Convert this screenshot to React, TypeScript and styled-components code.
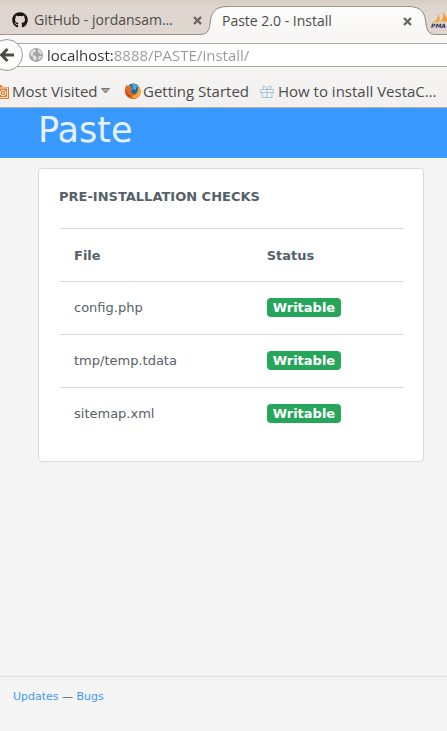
import React from "react";
import styled, { createGlobalStyle } from "styled-components";
import { FaGithub } from "react-icons/fa";

const GlobalStyle = createGlobalStyle`
  * { box-sizing: border-box; }
  body { margin: 0; background: #f4f4f4; }
`;

const Window = styled.div`
  display: flex;
  flex-direction: column;
  min-height: 100vh;
  overflow: hidden;
  background: #f4f4f4;
  color: #566167;
  font-family: "DejaVu Sans", sans-serif;
  font-size: 13px;
`;

const Chrome = styled.header`
  color: #4c4c4c;
  font-family: "Open Sans", "Noto Sans", sans-serif;
  font-size: 15px;
  background: #f3f2f0;
  border-bottom: 1px solid #b5aea6;
`;

const TabStrip = styled.div`
  display: flex;
  height: 35px;
  padding-top: 6px;
  font-size: 14px;
  background: linear-gradient(#d7cec5 0, #d9d0c8 4px, #dfd7cf 6px, #ded6cf 100%);
`;

const Tab = styled.div`
  display: flex;
  flex: 0 0 202px;
  align-items: center;
  gap: 6px;
  min-width: 0;
  margin-right: -2px;
  padding-left: 12px;
  border-bottom: 1px solid #9a948d;
`;

const ActiveTab = styled.div`
  display: flex;
  flex: 0 0 236px;
`;

const ActiveBody = styled.div`
  display: flex;
  flex: 1;
  align-items: center;
  min-width: 0;
  margin: 0 -4px 0 -6px;
  z-index: 1;
`;

const ActiveFill = styled.div`
  display: flex;
  flex: 1;
  min-width: 0;
  background: linear-gradient(#fdfdfc, #f8f7f6);
  border-top: 1px solid #9a948d;
`;

const TabLabel = styled.button`
  flex: 1;
  min-width: 0;
  padding: 0;
  border: 0;
  background: none;
  color: inherit;
  font: inherit;
  line-height: 20px;
  text-align: left;
  white-space: nowrap;
`;

const CloseButton = styled.button`
  display: flex;
  flex: none;
  padding: 0;
  border: 0;
  background: none;
`;

const EdgeTab = styled(Tab)`
  flex: 1 0 60px;
  gap: 0;
  padding-left: 0;
`;

const EdgeIcon = styled.div`
  display: flex;
  margin-left: -5px;
  z-index: 1;
`;

const NavBar = styled.div`
  display: flex;
  align-items: center;
  height: 40px;
  background: linear-gradient(#f8f7f6, #f5f4f2);
`;

const BackButton = styled.button`
  display: flex;
  flex: none;
  align-items: center;
  justify-content: center;
  width: 32px;
  height: 32px;
  margin-left: -9px;
  padding: 0;
  border: 1px solid #9b9a98;
  border-radius: 50%;
  background: #fcfcfb;
  z-index: 1;
`;

const AddressBar = styled.label`
  display: flex;
  flex: 1;
  align-items: center;
  gap: 4px;
  min-width: 0;
  height: 24px;
  margin-left: -6px;
  padding-left: 12px;
  border: solid #aaa59f;
  border-width: 1px 0;
  background: #fff;
`;

const AddressInput = styled.input`
  flex: 1;
  min-width: 0;
  padding: 0;
  border: 0;
  outline: 0;
  color: #8c8c8c;
  font: inherit;
  line-height: 20px;
  background: linear-gradient(90deg, #333 66px, #999 66px);
  background-clip: text;
  -webkit-background-clip: text;
  -webkit-text-fill-color: transparent;
`;

const Bookmarks = styled.nav`
  display: flex;
  align-items: center;
  height: 32px;
  background: linear-gradient(#f5f4f2, #f1f0ee);
`;

const Bookmark = styled.button<{ $width: number }>`
  display: flex;
  flex: 0 0 ${(p) => p.$width}px;
  align-items: center;
  gap: 2px;
  padding: 0;
  border: 0;
  background: none;
  color: inherit;
  font: inherit;
  line-height: 20px;
  white-space: nowrap;

  svg { flex: none; }
`;

const FeedBookmark = styled(Bookmark)`
  margin-left: -5px;
  gap: 3px;
`;

const PageBookmark = styled(Bookmark)`
  gap: 4px;
`;

const Banner = styled.div`
  height: 50px;
  padding-left: 38px;
  background: #3a99ff;
`;

const Brand = styled.h1`
  margin: 0;
  color: #e6f1ff;
  font-size: 35px;
  font-weight: 400;
  line-height: 44px;
`;

const Card = styled.main`
  margin: 10px 23px 20px 38px;
  padding: 20px;
  border: 1px solid #d9dadb;
  border-radius: 4px;
  background: #fff;
`;

const CardTitle = styled.h2`
  margin: 0 0 23px;
  font-size: 13px;
  line-height: 16px;
`;

const Checks = styled.table`
  width: 100%;
  border-collapse: collapse;
  table-layout: fixed;
`;

const cell = `
  height: 53px;
  padding: 0 15px;
  border-top: 1px solid #d9dadb;
  text-align: left;
`;

const HeadCell = styled.th<{ $share: number }>`
  ${cell}
  width: ${(p) => p.$share}%;
`;

const Cell = styled.td`
  ${cell}
  padding-bottom: 2px;
`;

const Status = styled.span`
  display: inline-block;
  padding: 0 6px;
  border-radius: 4px;
  background: #26a65b;
  color: #fff;
  font-weight: 700;
  line-height: 19px;
`;

const Footer = styled.footer`
  height: 55px;
  margin-top: auto;
  padding: 12px 13px;
  border-top: 1px solid #dedede;
  font-size: 11px;
  line-height: 16px;
`;

const FooterLink = styled.a`
  color: #4499ea;
  text-decoration: none;
`;

const CloseIcon = () => (
  <svg width="9" height="9" viewBox="0 0 9 9">
    <path d="M1 1L8 8M8 1L1 8" stroke="#696561" strokeWidth="2.4" />
  </svg>
);

const TabCurve = ({ flip = false }: { flip?: boolean }) => (
  <svg width="28" height="29" viewBox="0 0 28 29">
    <defs>
      <linearGradient id={flip ? "curveRight" : "curveLeft"} x2="0" y2="1">
        <stop stopColor="#fdfdfc" />
        <stop offset="1" stopColor="#f8f7f6" />
      </linearGradient>
    </defs>
    <g transform={flip ? "translate(28 0) scale(-1 1)" : undefined}>
      <path
        d="M0 29V28.5C7 28.5 9 25 10 18C11 6 15 .5 28 .5V29Z"
        fill={`url(#${flip ? "curveRight" : "curveLeft"})`}
      />
      <path d="M0 28.5C7 28.5 9 25 10 18C11 6 15 .5 28 .5" fill="none" stroke="#8f8a84" />
    </g>
  </svg>
);

const BackIcon = () => (
  <svg width="16" height="16" viewBox="0 0 16 16">
    <path d="M8.5 2L2.5 8L8.5 14M3 8H15" fill="none" stroke="#4b4a48" strokeWidth="3" />
  </svg>
);

const GlobeIcon = () => (
  <svg width="14" height="14" viewBox="0 0 14 14">
    <circle cx="7" cy="7" r="7" fill="#a6a6a6" />
    <path
      d="M2 3L5 1L7 2L6 4L4 5L4 7L7 8L8 10L6 13L4 11L4 9L1 7ZM9 1L12 3L13 6L11 6L9 4ZM10 8L13 8L11 11L9 12Z"
      fill="#dedede"
    />
  </svg>
);

const FeedIcon = () => (
  <svg width="14" height="15" viewBox="0 0 14 15">
    <path d="M0 1H6L8 3H14V15H0Z" fill="#dd7a2c" />
    <rect x="1" y="4" width="11.5" height="9.5" fill="none" stroke="#fbe6d3" />
    <circle cx="8" cy="9" r="2.8" fill="none" stroke="#fff0e2" />
    <circle cx="8" cy="9" r="1" fill="#fff0e2" />
  </svg>
);

const FirefoxIcon = () => (
  <svg width="16" height="16" viewBox="0 0 16 16">
    <path
      d="M1.5 1.5L3 3.5C4 2.5 6 2.5 7 3.5L5.5 5L7.5 6L5.5 7.5C5.5 10 9 11 11.5 8.5C13 7 13 4.5 12 2C15 4 16 7 15.5 10C14.5 14 11.5 16 8 16C3 16 0 12 0 8C0 5 1 3 1.5 1.5Z"
      fill="#e5671e"
    />
    <path
      d="M3 3C5 0 10-.5 13 2.500C15 5 14.500 8.500 12.500 10C10.500 12 6.500 11 5.500 8L7.500 6L5.500 5L7 3.500C6 2.500 4 2.500 3 3Z"
      fill="#1c679f"
    />
    <path d="M7 1.500C9 .5 12 1.500 13 4L11 4.500L11 7L8 6L8 4Z" fill="#48b3da" />
    <path d="M13 2.500C16 5 16.500 10 14 13C11 16 7 15 5 13C10 14 14 9 13 2.500Z" fill="#f6a832" />
    <path d="M.5 6C1 10 4 13 8 13.500C5 15 1 13 .2 9Z" fill="#c9382b" />
  </svg>
);

const GiftIcon = () => (
  <svg width="14" height="13" viewBox="0 0 14 13" fill="none" stroke="#a1c5dc">
    <path d="M.5 4.500H13.500V7.500H.5ZM2 7.500V12.500H12V7.500M7 4.500V12.500M7 4C5 0 2 .5 3 3L4 4M7 4C9 0 12 .5 11 3L10 4" />
  </svg>
);

const SailIcon = () => (
  <svg width="22" height="17" viewBox="0 0 22 17">
    <path d="M3 10C6 8 7 5 7 2C9 5 9 8 8 10ZM9 10C12 7 13 3 12 0C16 4 17 8 16 10Z" fill="#f5a13d" />
    <path d="M1 11C8 9 14 9 20 11" fill="none" stroke="#e9b87e" />
    <text x="0" y="16" fill="#33325f" fontFamily="DejaVu Sans" fontSize="6" fontWeight="700" fontStyle="italic">
      PMA
    </text>
  </svg>
);

const files = ["config.php", "tmp/temp.tdata", "sitemap.xml"];

export default function App() {
  return (
    <Window>
      <GlobalStyle />
      <Chrome>
        <TabStrip>
          <Tab>
            <FaGithub size={16} color="#181512" />
            <TabLabel>GitHub - jordansam…</TabLabel>
            <CloseButton aria-label="Close GitHub tab">
              <CloseIcon />
            </CloseButton>
          </Tab>
          <ActiveTab>
            <TabCurve />
            <ActiveFill>
              <ActiveBody>
                <TabLabel>Paste 2.0 - Install</TabLabel>
                <CloseButton aria-label="Close Paste tab">
                  <CloseIcon />
                </CloseButton>
              </ActiveBody>
            </ActiveFill>
            <TabCurve flip />
          </ActiveTab>
          <EdgeTab>
            <EdgeIcon>
              <SailIcon />
            </EdgeIcon>
          </EdgeTab>
        </TabStrip>
        <NavBar>
          <BackButton aria-label="Back">
            <BackIcon />
          </BackButton>
          <AddressBar>
            <GlobeIcon />
            <AddressInput aria-label="Address" defaultValue="localhost:8888/PASTE/install/" />
          </AddressBar>
        </NavBar>
        <Bookmarks>
          <FeedBookmark $width={130}>
            <FeedIcon />
            Most Visited
            <svg width="9" height="6" viewBox="0 0 9 6">
              <path d="M.5 .5H8.500L4.500 5Z" fill="#aaa7a2" stroke="#77736e" />
            </svg>
          </FeedBookmark>
          <Bookmark $width={135}>
            <FirefoxIcon />
            Getting Started
          </Bookmark>
          <PageBookmark $width={180}>
            <GiftIcon />
            How to install VestaC…
          </PageBookmark>
        </Bookmarks>
      </Chrome>
      <Banner>
        <Brand>Paste</Brand>
      </Banner>
      <Card>
        <CardTitle>PRE-INSTALLATION CHECKS</CardTitle>
        <Checks>
          <thead>
            <tr>
              <HeadCell $share={56}>File</HeadCell>
              <HeadCell $share={44}>Status</HeadCell>
            </tr>
          </thead>
          <tbody>
            {files.map((file) => (
              <tr key={file}>
                <Cell>{file}</Cell>
                <Cell>
                  <Status>Writable</Status>
                </Cell>
              </tr>
            ))}
          </tbody>
        </Checks>
      </Card>
      <Footer>
        <FooterLink href="#updates">Updates</FooterLink> — <FooterLink href="#bugs">Bugs</FooterLink>
      </Footer>
    </Window>
  );
}
